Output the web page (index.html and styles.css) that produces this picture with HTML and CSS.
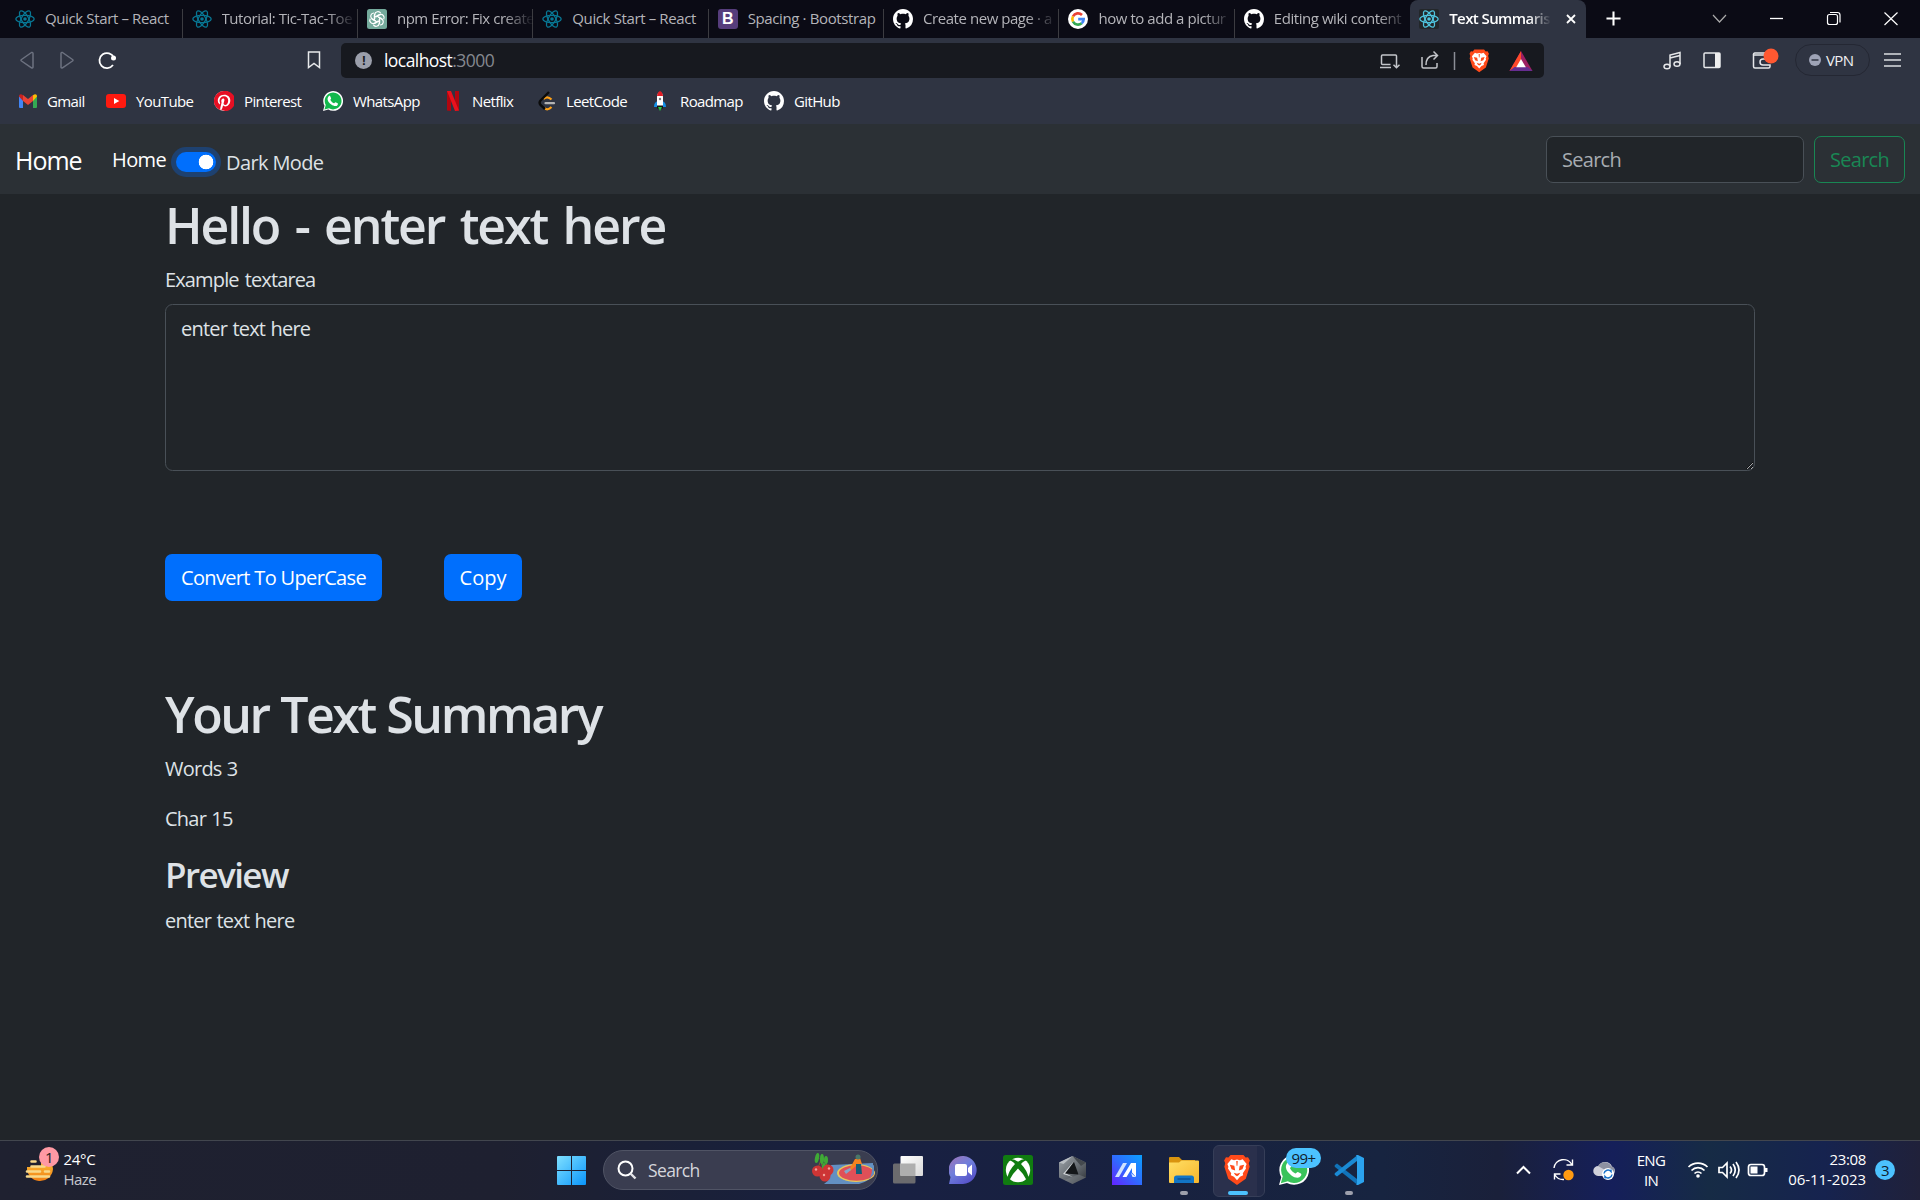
FILE: index.html
```
<!DOCTYPE html>
<html lang="en">
<head>
<meta charset="utf-8">
<title>Text Summariser</title>
<link rel="stylesheet" href="styles.css">
</head>
<body>
<svg class="defs" aria-hidden="true">
  <defs>
    <g id="react">
      <g fill="none" stroke="currentColor" stroke-width="1.3">
        <ellipse cx="10" cy="10" rx="9.2" ry="3.6"/>
        <ellipse cx="10" cy="10" rx="9.2" ry="3.6" transform="rotate(60 10 10)"/>
        <ellipse cx="10" cy="10" rx="9.2" ry="3.6" transform="rotate(120 10 10)"/>
      </g>
      <circle cx="10" cy="10" r="1.8" fill="currentColor"/>
    </g>
    <path id="octocat" fill="#fff" d="M8 0C3.58 0 0 3.58 0 8c0 3.54 2.29 6.53 5.47 7.59.4.07.55-.17.55-.38 0-.19-.01-.82-.01-1.49-2.01.37-2.53-.49-2.69-.94-.09-.23-.48-.94-.82-1.13-.28-.15-.68-.52-.01-.53.63-.01 1.08.58 1.23.82.72 1.21 1.87.87 2.33.66.07-.52.28-.87.51-1.07-1.78-.2-3.64-.89-3.64-3.95 0-.87.31-1.59.82-2.15-.08-.2-.36-1.02.08-2.12 0 0 .67-.21 2.2.82.64-.18 1.32-.27 2-.27s1.36.09 2 .27c1.53-1.04 2.2-.82 2.2-.82.44 1.1.16 1.92.08 2.12.51.56.82 1.27.82 2.15 0 3.07-1.87 3.75-3.65 3.95.29.25.54.73.54 1.48 0 1.07-.01 1.93-.01 2.2 0 .21.15.46.55.38A8.01 8.01 0 0 0 16 8c0-4.42-3.58-8-8-8z"/>
    <g id="brave">
      <path fill="#ff4a1a" d="M6 0h12l2 2.400 2.300-.3 1.700 3-1 2.700.8 3.200-3.600 11.200L12 28l-8.200-5.800L.2 11 1 7.800 0 5.100 1.700 2.100l2.300.3z"/>
      <path fill="#fff" d="M12 4.200l2.800.6 2.500-.8 3.700 4.300-1 2.700.4 1.500-3 4.500.4 2-3 1.300L12 23.500l-2.800-3.200-3-1.300.4-2-3-4.500.4-1.500-1-2.700L6.700 4l2.500.8z"/>
      <path fill="#ff4a1a" d="M5.300 9.200l4.200.9.8 4.400-3.400-1.200zM18.700 9.200l-4.200.9-.8 4.400 3.400-1.200zM9 16.500l3 1.100 3-1.100-1.300 2.200-1.700 1.100-1.700-1.100zM11.300 5.500h1.400l-.3 4.500h-.8z"/>
    </g>
    <path id="bubble" d="M0 20l1.500-5.200A9.900 9.900 0 1 1 5.300 18.600z"/>
    <path id="handset" d="M5.700 5.200c.5-.5 1.200-.5 1.500.1l.9 2c.2.500-.9 1.300-.7 1.700.8 1.500 2 2.600 3.500 3.300.4.200 1.200-1.200 1.700-1l2 1c.5.300.3 1.100 0 1.600-1.100 1.900-3.900 1.400-6.300-.3-2-1.400-3.400-3.300-3.700-5.200-.1-1.200.3-2.400 1.100-3.200z"/>
    <linearGradient id="winblue" x1="0" y1="0" x2="1" y2="1"><stop offset="0" stop-color="#7fe0ff"/><stop offset="1" stop-color="#0a95fb"/></linearGradient>
    <linearGradient id="chatfill" x1="0" y1="0" x2=".7" y2="1"><stop offset="0" stop-color="#a173b5"/><stop offset=".5" stop-color="#6f7fdc"/><stop offset="1" stop-color="#5550c8"/></linearGradient>
    <linearGradient id="asus" x1="1" y1="0" x2="0" y2="1"><stop offset="0" stop-color="#0aa0ff"/><stop offset=".5" stop-color="#2f6cff"/><stop offset="1" stop-color="#6422ff"/></linearGradient>
    <linearGradient id="folder" x1="0" y1="0" x2="1" y2="1"><stop offset="0" stop-color="#ffdf65"/><stop offset="1" stop-color="#f8b62c"/></linearGradient>
    <linearGradient id="sun" x1="0" y1="0" x2="0" y2="1"><stop offset="0" stop-color="#ffc83c"/><stop offset="1" stop-color="#f08015"/></linearGradient>
    <linearGradient id="sheet" x1="0" y1="0" x2="1" y2="1"><stop offset="0" stop-color="#fff"/><stop offset="1" stop-color="#d8d8d8"/></linearGradient>
    <linearGradient id="steel" x1="0" y1="0" x2="1" y2="1"><stop offset="0" stop-color="#9da3a9"/><stop offset=".5" stop-color="#6a7076"/><stop offset="1" stop-color="#2c3035"/></linearGradient>
  </defs>
</svg>

<header class="tabs">
  <div class="tab first"><svg class="fav react" viewBox="0 0 20 20"><use href="#react"/></svg><span class="title">Quick Start – React</span></div>
  <div class="tab"><svg class="fav react" viewBox="0 0 20 20"><use href="#react"/></svg><span class="title faded">Tutorial: Tic-Tac-Toe</span></div>
  <div class="tab"><svg class="fav" viewBox="0 0 20 20"><rect width="20" height="20" rx="2.500" fill="#74aa9c"/><g fill="none" stroke="#fff" stroke-width="1.200"><path id="petal" d="M7.700 10V5.600a3.200 3.200 0 0 1 6-1.200M7.700 8.300l4.100-2.400a3 3 0 0 1 1.600-.3"/><use href="#petal" transform="rotate(60 10 10)"/><use href="#petal" transform="rotate(120 10 10)"/><use href="#petal" transform="rotate(180 10 10)"/><use href="#petal" transform="rotate(240 10 10)"/><use href="#petal" transform="rotate(300 10 10)"/></g></svg><span class="title faded">npm Error: Fix create</span></div>
  <div class="tab"><svg class="fav react" viewBox="0 0 20 20"><use href="#react"/></svg><span class="title">Quick Start – React</span></div>
  <div class="tab"><span class="fav bootstrap">B</span><span class="title">Spacing · Bootstrap</span></div>
  <div class="tab"><svg class="fav" viewBox="0 0 16 16"><use href="#octocat"/></svg><span class="title faded">Create new page · a</span></div>
  <div class="tab"><svg class="fav" viewBox="0 0 20 20"><circle cx="10" cy="10" r="10" fill="#fff"/><g fill="none" stroke-width="2.600"><path stroke="#ea4335" d="M5 7.300A5.700 5.700 0 0 1 14 6"/><path stroke="#fbbc05" d="M5 12.700a5.700 5.700 0 0 1 0-5.400"/><path stroke="#34a853" d="M13.700 14.300A5.700 5.700 0 0 1 5 12.700"/><path stroke="#4285f4" d="M10.200 10.100h5.500a5.700 5.700 0 0 1-2 4.200"/></g></svg><span class="title faded">how to add a pictur</span></div>
  <div class="tab last"><svg class="fav" viewBox="0 0 16 16"><use href="#octocat"/></svg><span class="title faded">Editing wiki content</span></div>
  <div class="tab active"><svg class="fav react-on" viewBox="0 0 20 20"><rect width="20" height="20" rx="2" fill="#23272a"/><use href="#react"/></svg><span class="title faded">Text Summaris</span><svg class="close" viewBox="0 0 10 10"><path d="M1 1l8 8M9 1l-8 8" stroke="#fff" stroke-width="1.800"/></svg></div>
  <svg class="plus" viewBox="0 0 16 16"><path d="M8 .5v15M.5 8h15" stroke="#fff" stroke-width="2.200"/></svg>
  <div class="win">
    <svg width="57" height="38" viewBox="0 0 57 38"><path d="M22 15l6.500 7 6.500-7" fill="none" stroke="#aaa" stroke-width="1.200"/></svg>
    <svg width="57" height="38" viewBox="0 0 57 38"><path d="M22 18.500h13" stroke="#fff" stroke-width="1.300"/></svg>
    <svg width="57" height="38" viewBox="0 0 57 38"><rect x="22.500" y="14.500" width="10" height="10" rx="2" fill="none" stroke="#fff" stroke-width="1.200"/><path d="M25 12.500h7.500a2.500 2.500 0 0 1 2.500 2.500v7.500" fill="none" stroke="#fff" stroke-width="1.200"/></svg>
    <svg width="58" height="38" viewBox="0 0 58 38"><path d="M22.500 12.500l13 12.500M35.500 12.500l-13 12.500" stroke="#fff" stroke-width="1.200"/></svg>
  </div>
</header>

<section class="toolbar">
  <svg class="navicon" width="140" height="44" viewBox="0 0 140 44"><g fill="none" stroke="#6d7280" stroke-width="1.500" stroke-linejoin="round"><path d="M33 15.500v13.500q0 1.500-1.500.8L21.500 23q-1-.8 0-1.500L31.500 14.500q1.500-.5 1.500 1z"/><path d="M61 15.500v13.500q0 1.500 1.500.8L72.500 23q1-.8 0-1.500L62.500 14.500q-1.500-.5-1.500 1z"/></g><path d="M113 27a7.500 7.500 0 1 1 .8-7.500" fill="none" stroke="#fff" stroke-width="1.800"/><circle cx="113.500" cy="20" r="2.500" fill="#fff"/></svg>
  <svg class="marker" width="16" height="20" viewBox="0 0 16 20"><path d="M2.500 2h11v15.500L8 13.500l-5.500 4z" fill="none" stroke="#e8e9ec" stroke-width="1.500"/></svg>
  <div class="url">
    <span class="info">!</span><span class="addr">localhost<i>:3000</i></span>
    <svg class="urlicons" width="164" height="34" viewBox="0 0 164 34">
      <g fill="none" stroke="#c3c5ca" stroke-width="1.500"><path d="M16.500 20.500h-8a1 1 0 0 1-1-1v-7.500a1 1 0 0 1 1-1h13a1 1 0 0 1 1 1V15M6 23.500h11M22.500 15v8.500M19.500 20.800l3 3 3-3"/><path d="M48 13v9.500a1.500 1.500 0 0 0 1.500 1.500h12a1.500 1.500 0 0 0 1.500-1.500V19M52 21q0-8.500 7-9.500h4M59.500 7.500l4 4-4 4"/></g>
      <path d="M80.500 8v18" stroke="#8b8e96" stroke-width="1.500"/>
      <use href="#brave" transform="translate(95.500 5.500) scale(.81)"/>
      <path d="M147 7l11.500 20h-23z" fill="#9e1f63"/><path d="M147 7l-11.500 20 11.500-7z" fill="#ff4a2a"/><path d="M135.500 27h23l-5-4h-13z" fill="#662d91"/><path d="M147 15l4.800 8.200h-9.600z" fill="#fff"/>
    </svg>
  </div>
  <div class="actions">
    <svg width="160" height="44" viewBox="0 0 160 44">
      <g fill="none" stroke="#e6e7ea" stroke-width="1.500"><ellipse cx="25" cy="28.500" rx="3" ry="2.300"/><ellipse cx="35" cy="26" rx="3" ry="2.300"/><path d="M28 28.500V17l10-2.500V26M28 20l10-2.500"/><rect x="62" y="15" width="16" height="14.500" rx="1"/><path d="M124 21h3.500M111.500 17h13.500v4h-4a3 3 0 0 0 0 6h7v1.500a1.500 1.500 0 0 1-1.500 1.500h-13.500a1.500 1.500 0 0 1-1.500-1.500zM111.500 17a1.500 1.500 0 0 1 1.500-2h12"/></g><path fill="#eee" d="M73 15h5v14.500h-5z"/><circle cx="129" cy="18" r="7.500" fill="#ff5831"/>
    </svg>
    <span class="vpn"><svg width="12" height="12" viewBox="0 0 12 12"><circle cx="6" cy="6" r="6" fill="#9ea3b6"/><path d="M2.500 6h7" stroke="#2f3442" stroke-width="1.500"/></svg><span>VPN</span></span>
    <svg width="17" height="16" viewBox="0 0 17 16"><path d="M0 2h17M0 8h17M0 14h17" stroke="#dcdde1" stroke-width="1.500"/></svg>
  </div>
</section>

<nav class="bookmarks">
  <a class="w1"><svg width="18" height="14" viewBox="0 0 18 14"><path fill="#4285f4" d="M0 2v11a1 1 0 0 0 1 1h3V5z"/><path fill="#34a853" d="M18 2v11a1 1 0 0 1-1 1h-3V5z"/><path fill="#ea4335" d="M4 1l5 4 5-4v6l-5 4-5-4z"/><path fill="#c5221f" d="M4 7V1.200C2-.5 0 0 0 2.500z"/><path fill="#fbbc04" d="M14 7V1.200c2-1.700 4-1.200 4 1.300z"/></svg>Gmail</a>
  <a class="w2"><svg width="20" height="14" viewBox="0 0 20 14"><rect width="20" height="14" rx="3" fill="#ff1a10"/><path d="M8 4v6l5.300-3z" fill="#fff"/></svg>YouTube</a>
  <a class="w3"><svg width="20" height="20" viewBox="0 0 20 20"><circle cx="10" cy="10" r="10" fill="#fff"/><path fill="#e60f23" d="M10 0a10 10 0 0 0-3.700 19.300c-.1-.8-.1-2 .1-2.900l1.200-5s-.3-.6-.3-1.500c0-1.400.8-2.400 1.800-2.400.9 0 1.300.6 1.300 1.400 0 .9-.5 2.100-.8 3.300-.2 1 .5 1.800 1.500 1.800 1.800 0 3.100-1.900 3.100-4.600 0-2.400-1.700-4.100-4.200-4.100a4.400 4.400 0 0 0-4.500 4.400c0 .9.300 1.800.7 2.300l-.3 1.400c-1.600-.7-2.100-2.400-2.100-3.800 0-3 2.200-5.900 6.500-5.900 3.400 0 6 2.400 6 5.600 0 3.400-2.100 6.100-5 6.100-1 0-1.900-.5-2.200-1.100l-.6 2.300c-.2.800-.8 1.900-1.200 2.500A10 10 0 1 0 10 0z"/></svg>Pinterest</a>
  <a class="w4"><svg width="20" height="20" viewBox="0 0 20 20"><use href="#bubble" fill="#fff"/><use href="#bubble" fill="#12b84c" transform="translate(1.500 1.500) scale(.85)"/><use href="#handset" fill="#fff"/></svg>WhatsApp</a>
  <a class="w5"><svg width="12" height="20" viewBox="0 0 12 20"><path fill="#b1060f" d="M0 0h4v20l-4-.5zM8 0h4v19.500L8 20z"/><path fill="#e9121d" d="M0 0h4l8 19.500-4 .5z"/></svg>Netflix</a>
  <a class="w6"><svg width="18" height="20" viewBox="0 0 18 20"><path d="M5.500 8q4-3.500 8 .5M6.500 17q3 3 7-1" fill="none" stroke="#ffa116" stroke-width="2.200"/><path d="M11 1L2.500 9.500q-1.800 2.200 0 4.500l4.500 4" fill="none" stroke="#0b0b0b" stroke-width="2.400"/><path d="M7.500 12.200h8.500" stroke="#b3b3b3" stroke-width="2.200" stroke-linecap="round"/></svg>LeetCode</a>
  <a class="w7"><svg width="14" height="20" viewBox="0 0 14 20"><path fill="#1590e8" d="M1 16q0-5 4-6h4q4 1 4 6z"/><path fill="#151515" d="M4 14h6v3.500H4z"/><path fill="#fff" d="M4 14.500V6q0-4 3-5 3 1 3 5v8.500z"/><path fill="#e21d25" d="M4 5q.5-4 3-5 2.500 1 3 5z"/><circle cx="7" cy="8" r="1.200" fill="#777"/><path fill="#26c940" d="M5 16h4l-2 4z"/></svg>Roadmap</a>
  <a class="w8"><svg width="20" height="20" viewBox="0 0 16 16"><use href="#octocat"/></svg>GitHub</a>
</nav>

<div class="navbar">
  <a class="brand">Home</a><a class="link">Home</a><span class="switch"></span><label class="mode">Dark Mode</label>
  <div class="searchbox">Search</div><button class="btn-search">Search</button>
</div>

<main>
  <h1>Hello - enter text here</h1>
  <label class="label">Example textarea</label>
  <textarea class="area">enter text here</textarea>
  <div class="buttons"><button class="btn convert">Convert To UperCase</button><button class="btn copy">Copy</button></div>
  <h1 class="summary">Your Text Summary</h1>
  <p>Words 3</p>
  <p>Char 15</p>
  <h2>Preview</h2>
  <p>enter text here</p>
</main>

<footer class="taskbar">
  <div class="weather">
    <span class="haze"><svg width="30" height="30" viewBox="0 0 30 30"><path d="M2 13h14V3q12 3 12 12a13 13 0 0 1-26-2z" fill="url(#sun)"/><g stroke="#f8d98a" stroke-width="2.600" stroke-linecap="round"><path d="M6.500 7.500h4M6.500 12.500h13M2 17.500h13M20 17.500h4M2 22.500h22"/></g></svg><b>1</b></span>
    <span class="temp">24°C<br><i>Haze</i></span>
  </div>
  <div class="apps">
    <span class="start"><svg width="29" height="29" viewBox="0 0 29 29"><path fill="url(#winblue)" d="M1 0h13v14H0V1a1 1 0 0 1 1-1zM15 0h13a1 1 0 0 1 1 1v13H15zM0 15h14v14H1a1 1 0 0 1-1-1zM15 15h14v13a1 1 0 0 1-1 1H15z"/></svg></span>
    <div class="pill">
      <svg width="20" height="20" viewBox="0 0 20 20"><circle cx="8.500" cy="8.500" r="7" fill="none" stroke="#fff" stroke-width="2"/><path d="M13.500 13.500l5 5" stroke="#e4e4e8" stroke-width="2.400"/></svg><span>Search</span>
      <svg class="art" width="63" height="34" viewBox="0 0 63 34">
        <path fill="#6390c2" d="M12 31q8-4 7-19l42-2v9q-2 9-14 12z"/><ellipse cx="44" cy="20" rx="19" ry="9" fill="#e8c85c"/><ellipse cx="44.500" cy="20" rx="17.500" ry="7.700" fill="#df5058"/><path fill="#6390c2" d="M60 13l2-1v9l-5 5q4-6 3-13z"/>
        <path fill="#f5821f" d="M43 6l5-1 2 6-6 2-6 5-1-1z"/><path fill="#145d78" d="M44 11h5l1 10h-6z"/><circle cx="46" cy="4" r="2.500" fill="#4a7769"/><path fill="#83a5c9" d="M32 18l6-3 1 2-5 4z"/>
        <path d="M6 15L10 4l8 13M8 5l4 15" stroke="#8c5a31" fill="none"/><g fill="#3faa36"><ellipse cx="5" cy="5" rx="2" ry="5" transform="rotate(12 5 5)"/><ellipse cx="10" cy="6" rx="2" ry="5"/><ellipse cx="14" cy="7" rx="2" ry="4"/><ellipse cx="12" cy="14" rx="2" ry="4"/></g><g fill="#cd3535"><circle cx="5.500" cy="18" r="5.500"/><circle cx="16" cy="17" r="5.500"/><circle cx="13" cy="23" r="5.500"/></g><g fill="#f2a49a"><circle cx="4" cy="16.500" r="1.200"/><circle cx="17" cy="15.500" r="1.200"/><circle cx="12" cy="22" r="1.200"/></g>
      </svg>
    </div>
    <span class="app view"><svg width="30" height="28" viewBox="0 0 30 28"><rect y="7.500" width="22.500" height="20" rx="1.500" fill="#6b6b6e"/><rect x="7.500" width="22.500" height="20" rx="1" fill="url(#sheet)"/><path fill="#aeaeae" d="M7.500 7.500h15v12.500h-15z"/></svg></span>
    <span class="app chat"><svg width="28" height="28" viewBox="0 0 28 28"><path fill="url(#chatfill)" d="M0 28l1.500-7A14 14 0 1 1 14 28z"/><rect x="6" y="8" width="12" height="12" rx="2" fill="#fff"/><path fill="#fff" d="M19 12l4-3.500v11L19 16z"/></svg></span>
    <span class="app xbox"><svg width="30" height="30" viewBox="0 0 30 30"><rect width="30" height="30" rx="2.500" fill="#107c10"/><circle cx="15" cy="15" r="12.200" fill="#fff"/><path fill="#107c10" d="M7 4q4-.5 8 2.700Q19 3.500 23 4l1.500 1.300q-2.500-.5-6.500 3.700 6 6 7.700 14L23.500 25Q20 18 15 13.500 10 18 6.500 25l-2.200-2Q6 15 12 9 8 4.800 5.500 5.300z"/></svg></span>
    <span class="app"><svg width="27" height="28" viewBox="0 0 27 28"><path fill="url(#steel)" d="M13.500 0L27 6.500v15L13.500 28 0 21.500v-15z"/><path fill="#b9bec3" d="M13.500 0L0 6.500 4.500 8z"/><path fill="#44494e" d="M13.500 0L27 6.500 22 10z"/><path fill="#d2d6d9" d="M15 5L4 18l10 3-7-3.500z"/><path fill="#14171a" d="M15 6l4.500 12.500L6 17.500z"/><path fill="#8b9197" d="M19.500 18.500L27 21.500 13.500 28l-8-4z" opacity=".35"/></svg></span>
    <span class="app"><svg width="30" height="30" viewBox="0 0 30 30"><path fill="url(#asus)" d="M0 0h30v30H0z"/><path fill="#cfe2ff" d="M11 8h4L7 22H3z"/><path fill="#fff" d="M19 8l-8.500 14h4L20 13v4.500l4 4.500V8z"/><path fill="#dce9ff" d="M19 18l5 4h-3.500z"/></svg></span>
    <span class="app run"><svg width="30" height="26" viewBox="0 0 30 26"><path fill="#d9940f" d="M0 1a1 1 0 0 1 1-1h9l3 3h13v6H0z"/><path fill="url(#folder)" d="M0 5.500h10l2.500-2H29a1 1 0 0 1 1 1V25a1 1 0 0 1-1 1H1a1 1 0 0 1-1-1z"/><path fill="#1275c6" d="M5 26v-5q0-2.500 2.500-2.500h15q2.500 0 2.500 2.500v5z"/><path d="M8.500 22h13" stroke="#0b4d8c" stroke-width="1.300"/></svg></span>
    <span class="app current"><svg width="26" height="30" viewBox="0 0 24 28"><use href="#brave"/></svg></span>
    <span class="app whats"><svg width="30" height="30" viewBox="0 0 20 20"><use href="#bubble" fill="#fff"/><use href="#bubble" fill="#39c35a" transform="translate(1.200 1.200) scale(.88)"/><use href="#handset" fill="#fff"/></svg><b>99+</b></span>
    <span class="app run"><svg width="30" height="30" viewBox="0 0 30 30"><path fill="#1173b9" d="M3 8.500L23 24v5.500L1 12q-1-1 0-2z"/><path fill="#1a8ad4" d="M3 21.500L23 6V.5L1 18q-1 1 0 2z"/><path fill="#2ba3ee" d="M22 .5Q23-.5 24 0l6 3v24l-6 3q-1 .5-2-.5 1 0 1-1.500V2q0-1-1-1.500z"/></svg></span>
  </div>
  <div class="tray">
    <svg width="130" height="40" viewBox="0 0 130 40"><path d="M10 23.500l6.500-6.500 6.500 6.500" fill="none" stroke="#fff" stroke-width="2"/><g fill="none" stroke="#fff" stroke-width="1.400"><path d="M47 18a9.500 9.500 0 0 1 18-3M65.500 9.500v5.500h-6M47.500 29.500V24h6M48 25q3 5 9 4.500"/></g><circle cx="61.500" cy="25" r="5.200" fill="#ff9b12"/><path d="M91 26h12a5 5 0 0 0 2-9.500 7.500 7.500 0 0 0-13.500-.5A5 5 0 0 0 91 26z" fill="#cfd0da"/><path d="M91 16a7.500 7.500 0 0 1 13 0q5 2 3 6l-9-2z" fill="#8d91a2"/><circle cx="101" cy="24" r="6" fill="#fff"/><path d="M97 23.500a4 4 0 0 1 7-2v-2M105 24.500a4 4 0 0 1-7 2v2" fill="none" stroke="#1670c9" stroke-width="1.500"/></svg>
    <span class="lang">ENG<br>IN</span>
    <svg width="90" height="40" viewBox="0 0 90 40"><g fill="none" stroke="#fff" stroke-width="1.700"><path d="M3.500 17a13.500 13.500 0 0 1 19 0M6.500 20.500a9 9 0 0 1 13 0M9.500 23.500a5 5 0 0 1 7 0"/><path d="M34 17.500h3.500l4.500-4.500v14l-4.500-4.500H34zM45 16.500q3 3.500 0 7M48 14q4.500 6 0 12M51 12q6 8 0 16"/><rect x="63.500" y="14.500" width="16" height="11" rx="2.500"/></g><circle cx="13" cy="26" r="1.800" fill="#fff"/><path fill="#fff" d="M65.500 16.500h7v7h-7zM80 18h2.500v4H80z"/></svg>
    <span class="clock">23:08<br><i>06-11-2023</i></span>
    <span class="count">3</span>
  </div>
</footer>
</body>
</html>
```
FILE: styles.css
```
* { box-sizing: border-box; }
body {
  margin: 0; width: 1920px; height: 1200px; overflow: hidden;
  display: flex; flex-direction: column;
  background: #212529; color: #dee2e6;
  font: 20px/30px "Open Sans", sans-serif; letter-spacing: -0.031em;
}
svg { display: block; flex: none; }
i { font-style: normal; }
.defs { position: absolute; width: 0; height: 0; }

/* tab strip */
.tabs { height: 38px; flex: none; display: flex; background: #0b0b15; font-size: 15px; letter-spacing: -0.025em; }
.tab {
  width: 175.4px; flex: none; padding: 0 2px 0 9px; display: flex; align-items: center; gap: 10px; color: #b4b4b9;
  background: linear-gradient(#3c3c41, #3c3c41) right 9px / 1px 29px no-repeat;
}
.tab.first { width: 182.500px; padding-left: 15px; }
.tab.last { background: none; }
.tab.active { background: #2f3442; border-radius: 8px 8px 0 0; color: #fff; font-weight: 600; letter-spacing: -0.039em; padding-right: 10px; }
.fav { width: 20px; height: 20px; flex: none; }
.react { color: #087794; }
.react-on { color: #4fc4dd; }
.bootstrap { border-radius: 3px; background: #563d7c; color: #fff; font: bold 16px/20px "Liberation Sans", sans-serif; text-align: center; }
.title { flex: 1; white-space: nowrap; line-height: 24px; padding-bottom: 2px; }
.tabs .faded { letter-spacing: -0.030em; -webkit-mask-image: linear-gradient(90deg, #000 78%, transparent); mask-image: linear-gradient(90deg, #000 78%, transparent); }
.tabs .active .faded { letter-spacing: -0.039em; }
.close { width: 10px; height: 10px; margin: 0 0 0 5px; }
.plus { width: 15px; height: 15px; margin: 11px 0 0 20px; }
.win { display: flex; margin-left: auto; }

/* address row */
.toolbar { height: 44px; flex: none; display: flex; align-items: center; background: #2f3442; }
.marker { margin: 0 19px 0 166px; }
.url { width: 1203px; height: 35px; display: flex; align-items: center; background: #17191f; border-radius: 5px; padding-left: 14px; margin-top: 1px; }
.info { width: 17px; height: 17px; border-radius: 50%; background: #9b9fab; color: #17191f; font: bold 13px/17px "Liberation Sans", sans-serif; text-align: center; }
.addr { margin-left: 12px; font-size: 17.5px; color: #fff; letter-spacing: -0.032em; padding-bottom: 2px; }
.addr i { color: #85888f; }
.urlicons { margin-left: auto; margin-right: 6px; }
.actions { display: flex; align-items: center; margin-left: 98px; }
.vpn { width: 75px; height: 32px; margin: 0 14px 0 -7px; border: 1px solid #242733; border-radius: 16px; display: flex; align-items: center; gap: 5px; padding-left: 13px; font-size: 15px; color: #f0f0f3; }
.vpn span { padding-bottom: 1px; }
.bookmarks { height: 42px; flex: none; display: flex; background: #2f3442; color: #fff; font-size: 15px; padding-bottom: 5px; }
.bookmarks a { display: flex; align-items: center; gap: 10px; }
.w1 { width: 87px; padding-left: 19px; }
.w2 { width: 108px; padding-left: 19px; }
.w3 { width: 108px; padding-left: 19px; }
.w4 { width: 144px; padding-left: 20px; }
.w5 { width: 91px; }
.w6 { width: 115px; }
.w7 { width: 111px; }
.bookmarks .w5, .bookmarks .w7 { gap: 13px; }

/* site navbar */
.navbar { height: 70px; flex: none; display: flex; align-items: center; padding: 1px 15px 0; background: #2b3035; color: #fff; }
.brand { width: 97px; font-size: 25px; letter-spacing: -0.040em; }
.link { width: 64px; }
.switch { width: 40px; height: 20px; border-radius: 10px; margin-top: 4px; box-shadow: 0 0 0 5px #1e4170; background: radial-gradient(circle at 30px 10px, #fff 7px, #0d6efd00 7.600px), #006ffd; }
.mode { margin: 6px 0 0 10px; color: #dee2e6; }
.searchbox { width: 258px; height: 47px; margin-left: auto; border: 1px solid #495057; border-radius: 7px; background: #212529; color: #a7acb1; padding: 8px 15px; letter-spacing: -0.036em; }
.btn-search { width: 91px; height: 47px; margin-left: 10px; padding: 0; border: 1px solid #198754; border-radius: 7px; background: none; color: #198754; font: inherit; letter-spacing: -0.036em; }

/* page body */
main { flex: 1; width: 1590px; margin: 0 165px; }
h1 { margin: 0 0 10px; padding-top: 1px; font-size: 50px; line-height: 60px; font-weight: 600; letter-spacing: -0.042em; word-spacing: 0.09em; white-space: nowrap; }
.label { display: block; margin-bottom: 9px; letter-spacing: -0.043em; word-spacing: 0.08em; }
.area { display: block; width: 1590px; height: 167px; padding: 8.500px 15px 7px; border: 1px solid #495057; border-radius: 7.5px; background: #212529; color: #dee2e6; color-scheme: dark; font: inherit; letter-spacing: -0.040em; word-spacing: 0.050em; outline: 0; resize: vertical; }
.buttons { display: flex; gap: 62px; margin: 83px 0 82px; }
.btn { height: 47px; border: 0; border-radius: 7px; background: #006ffd; color: #fff; font: inherit; padding: 0; letter-spacing: -0.033em; }
.convert { width: 217px; }
.copy { width: 78px; letter-spacing: 0; }
.summary { letter-spacing: -0.049em; word-spacing: 0.020em; }
p { margin: 0 0 20px; letter-spacing: -0.038em; word-spacing: 0.040em; }
h2 { margin: 0 0 10px; font-size: 35px; line-height: 42px; font-weight: 600; letter-spacing: -0.045em; }

/* taskbar */
.taskbar {
  height: 60px; flex: none; display: flex; border-top: 1px solid #42464e; color: #fff; font-size: 15px; line-height: 20px;
  background: linear-gradient(90deg, #1f2130 0, #1e2030 26%, #1a2038 36%, #182042 47%, #18213f 60%, #172440 72%, #1a203a 78%, #151f5a 84%, #162b45 89%, #16234f 95%, #20213a 100%);
}
.weather { width: 557px; padding-left: 25px; display: flex; }
.haze { position: relative; width: 38.500px; padding-top: 13px; }
.haze b { position: absolute; left: 14px; top: 6px; width: 20px; height: 20px; border-radius: 50%; background: #ff99a4; color: #222; font-weight: 400; text-align: center; }
.temp { padding-top: 8px; letter-spacing: -0.020em; }
.temp i { color: #c6c7cd; letter-spacing: -0.035em; }
.apps { display: flex; align-items: center; padding-bottom: 1px; }
.start { width: 46px; }
.pill { position: relative; width: 275px; height: 40px; border: 1px solid #505465; border-radius: 20px; background: #3a3d50; display: flex; align-items: center; gap: 11px; padding-left: 13px; font-size: 17.5px; color: #d5d6dc; letter-spacing: -0.035em; }
.art { margin-left: auto; margin-right: 2px; }
.app { position: relative; width: 55px; height: 58px; display: flex; align-items: center; justify-content: center; }
.view { width: 60px; }
.chat { width: 50px; }
.xbox { width: 60px; }
.xbox + .app { width: 51px; margin-left: -1px; }
.xbox + .app + .app { width: 58px; }
.run::after, .current::after { content: ""; position: absolute; left: 23.5px; bottom: 4px; width: 8px; height: 4px; border-radius: 2px; background: #9ea0ac; }
.current::before { content: ""; position: absolute; left: 2px; top: 4px; width: 50px; height: 50px; border: 1px solid #363e58; border-radius: 6px; background: linear-gradient(90deg, #2a304c 43px, #222a47 43px); }
.current svg { position: relative; margin-right: 3px; }
.current::after { left: 17px; width: 20px; background: #4cc2ff; }
.whats b { position: absolute; left: 20px; top: 7px; width: 35px; height: 20px; border-radius: 10px; background: #4cc2ff; color: #10202c; font-weight: 400; text-align: center; }
.tray { display: flex; align-items: center; margin-left: auto; text-align: center; padding-bottom: 2px; }
.lang { width: 56px; margin: 0 6px 0 -14px; }
.clock { width: 82px; margin-left: 9px; text-align: right; letter-spacing: -0.023em; margin-top: -1px; }
.clock i { letter-spacing: -0.003em; }
.count { width: 20px; height: 20px; margin: 0 25px 0 9px; border-radius: 50%; background: #4cc2ff; color: #10202c; }
```
